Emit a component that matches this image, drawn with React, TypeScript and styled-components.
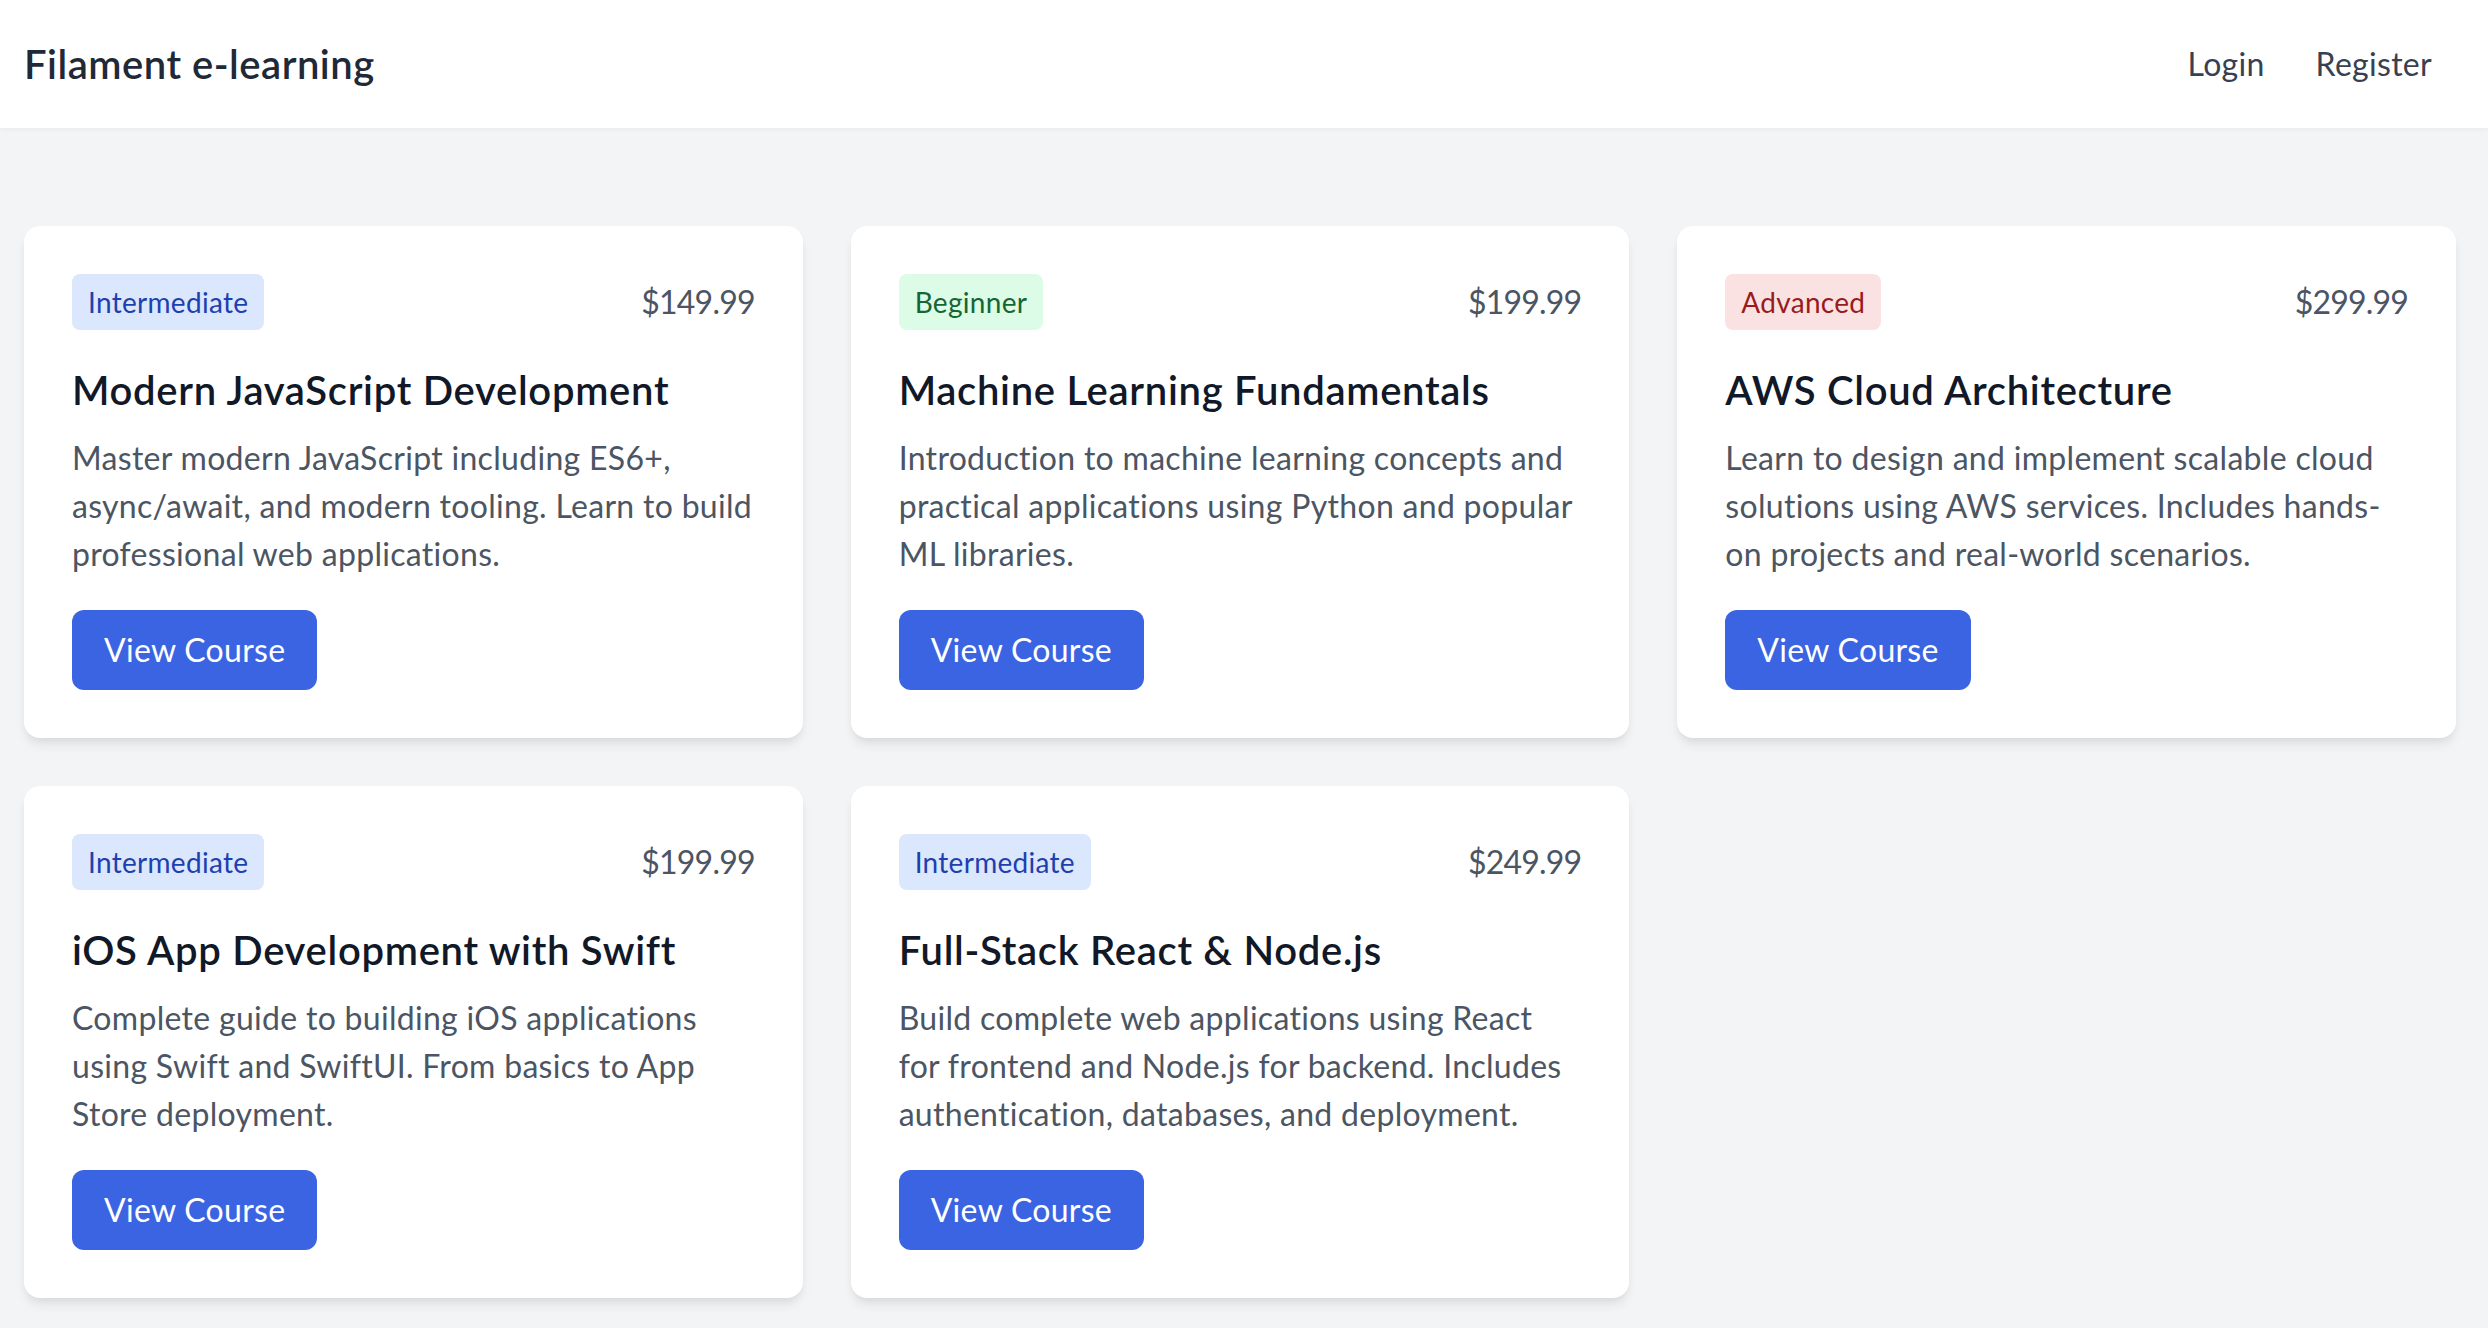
import styled, { createGlobalStyle } from "styled-components";

type Level = "Beginner" | "Intermediate" | "Advanced";

interface Course {
  id: number;
  level: Level;
  price: string;
  title: string;
  description: string;
}

// line breaks follow the layout of the original page
const courses: Course[] = [
  {
    id: 1,
    level: "Intermediate",
    price: "$149.99",
    title: "Modern JavaScript Development",
    description:
      "Master modern JavaScript including ES6+,\nasync/await, and modern tooling. Learn to build\nprofessional web applications.",
  },
  {
    id: 2,
    level: "Beginner",
    price: "$199.99",
    title: "Machine Learning Fundamentals",
    description:
      "Introduction to machine learning concepts and\npractical applications using Python and popular\nML libraries.",
  },
  {
    id: 3,
    level: "Advanced",
    price: "$299.99",
    title: "AWS Cloud Architecture",
    description:
      "Learn to design and implement scalable cloud\nsolutions using AWS services. Includes hands-\non projects and real-world scenarios.",
  },
  {
    id: 4,
    level: "Intermediate",
    price: "$199.99",
    title: "iOS App Development with Swift",
    description:
      "Complete guide to building iOS applications\nusing Swift and SwiftUI. From basics to App\nStore deployment.",
  },
  {
    id: 5,
    level: "Intermediate",
    price: "$249.99",
    title: "Full-Stack React & Node.js",
    description:
      "Build complete web applications using React\nfor frontend and Node.js for backend. Includes\nauthentication, databases, and deployment.",
  },
];

const levelColors: Record<Level, { bg: string; fg: string }> = {
  Beginner: { bg: "#dcfce7", fg: "#166534" },
  Intermediate: { bg: "#dbe7fc", fg: "#1e40af" },
  Advanced: { bg: "#fbe2e2", fg: "#991b1b" },
};

const App = () => {
  return (
    <>
      <GlobalStyle />
      <StyledHeader>
        <StyledBrand>Filament e-learning</StyledBrand>
        <StyledNav>
          <StyledNavLink href="#">Login</StyledNavLink>
          <StyledNavLink href="#">Register</StyledNavLink>
        </StyledNav>
      </StyledHeader>
      <StyledMain>
        {courses.map((course) => (
          <StyledCard key={course.id}>
            <StyledCardTop>
              <StyledBadge level={course.level}>{course.level}</StyledBadge>
              <StyledPrice>{course.price}</StyledPrice>
            </StyledCardTop>
            <StyledTitle>{course.title}</StyledTitle>
            <StyledDescription>{course.description}</StyledDescription>
            <StyledButton href="#">View Course</StyledButton>
          </StyledCard>
        ))}
      </StyledMain>
    </>
  );
};

export default App;

const GlobalStyle = createGlobalStyle`
  * {
    box-sizing: border-box;
  }

  body {
    margin: 0;
    background: #f3f4f6;
    font-family: Lato, "Liberation Sans", sans-serif;
    -webkit-font-smoothing: antialiased;
  }
`;

const StyledHeader = styled.header`
  display: flex;
  align-items: center;
  justify-content: space-between;
  height: 128px;
  padding: 0 32px 0 24px;
  background: #ffffff;
  box-shadow: 0 2px 4px rgba(0, 0, 0, 0.04);
`;

const StyledBrand = styled.h1`
  margin: 0;
  font-size: 40px;
  line-height: 56px;
  font-weight: 600;
  letter-spacing: 0.5px;
  color: #1f2937;
`;

const StyledNav = styled.nav`
  display: flex;
  align-items: center;
  gap: 3px;
`;

const StyledNavLink = styled.a`
  padding: 0 24px;
  font-size: 32px;
  line-height: 48px;
  letter-spacing: 0.3px;
  color: #374151;
  text-decoration: none;
`;

const StyledMain = styled.main`
  display: grid;
  grid-template-columns: repeat(3, 1fr);
  gap: 48px;
  padding: 98px 32px 48px 24px;
`;

const StyledCard = styled.div`
  padding: 48px;
  background: #ffffff;
  border-radius: 16px;
  box-shadow: 0 8px 12px -2px rgba(0, 0, 0, 0.08),
    0 4px 8px -4px rgba(0, 0, 0, 0.08);
`;

const StyledCardTop = styled.div`
  display: flex;
  align-items: center;
  justify-content: space-between;
  margin-bottom: 32px;
`;

const StyledBadge = styled.span<{ level: Level }>`
  padding: 8px 16px;
  font-size: 28px;
  line-height: 40px;
  letter-spacing: 0.3px;
  border-radius: 8px;
  background: ${({ level }) => levelColors[level].bg};
  color: ${({ level }) => levelColors[level].fg};
`;

const StyledPrice = styled.span`
  font-size: 32px;
  line-height: 48px;
  letter-spacing: -0.8px;
  color: #4b5563;
`;

const StyledTitle = styled.h3`
  margin: 0 0 16px;
  font-size: 40px;
  line-height: 56px;
  font-weight: 600;
  letter-spacing: 0.7px;
  color: #111827;
`;

const StyledDescription = styled.p`
  margin: 0 0 32px;
  font-size: 32px;
  line-height: 48px;
  letter-spacing: 0.3px;
  white-space: pre-line;
  color: #4b5563;
`;

const StyledButton = styled.a`
  display: inline-block;
  padding: 16px 32px;
  font-size: 32px;
  line-height: 48px;
  letter-spacing: 0.3px;
  color: #ffffff;
  background: #3b64e2;
  border-radius: 12px;
  text-decoration: none;
`;
